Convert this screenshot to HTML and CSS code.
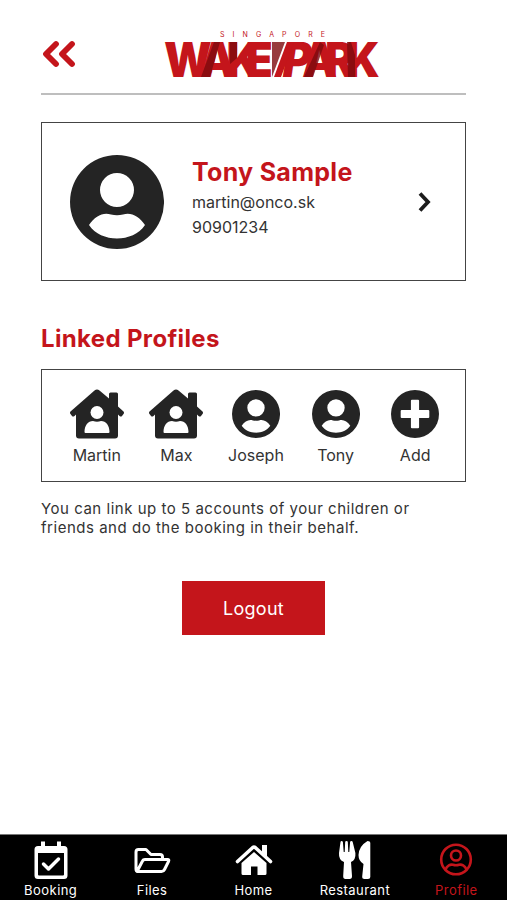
FILE: index.html
```html
<!DOCTYPE html>
<html lang="en">
<head>
  <meta charset="UTF-8">
  <title>Profile</title>
  <link rel="stylesheet" href="styles.css">
</head>
<body>
  <!-- shared icons -->
  <svg class="sprite">
    <symbol id="user" viewBox="0 0 94 94">
      <path fill-rule="evenodd" d="M47 0a47 47 0 1 1 0 94a47 47 0 0 1 0-94zM47 18a17 17 0 1 0 0 34a17 17 0 0 0 0-34zM19 70C31 88 63 88 75 70C69 61 61 57 53 59.500Q47 61 41 59.500C33 57 25 61 19 70z"/>
    </symbol>
    <symbol id="house-user" viewBox="0 0 54 49">
      <path d="M24.500 1Q27 -1 29.500 1L39 9V4.500Q39 3 40.500 3H46.500Q48 3 48 4.500V17L53.500 22Q54.500 23 53.500 24.500L52 26.500Q51 27.500 49.500 26.500L48 25V46Q48 49 45 49H9Q6 49 6 46V25L4.500 26.500Q3 27.500 2 26.500L.5 24.500Q-.5 23 .5 22z"/>
      <g fill="#fff"><circle cx="27" cy="23" r="6.500"/><path d="M14.500 42.500C14.500 36 18 31.500 23 31.500Q27 33 31 31.500C36 31.500 39.500 36 39.500 42.500Q39.500 43.500 38.500 43.500H15.500Q14.500 43.500 14.500 42.500z"/></g>
    </symbol>
  </svg>

  <main class="page">
    <header class="header">
      <svg class="back" viewBox="0 0 32 26"><path d="M13 3L3 13L13 23M29 3L19 13L29 23"/></svg>
      <svg class="logo" viewBox="0 0 216 52">
        <text class="logo-top" x="56" y="8" textLength="105">SINGAPORE</text>
        <text class="logo-main" transform="scale(.92 1)" x="0 39 68 89" y="48">WAKE</text>
        <text class="logo-main" transform="scale(.92 1)" x="129 150 175 198" y="48"><tspan class="logo-slant">P</tspan>ARK</text>
        <!-- folded shadows over the letters -->
        <path class="shade" d="M50 13H56L46 48H37zM66 13H73V29L66 35zM108 13H121L108 48z"/>
        <path class="shade" d="M156 13L160 16L149 48H140zM183 13H187L191 26V48H184z"/>
        <path class="slash" d="M123 13H130L117 48H110z"/>
      </svg>
    </header>

    <section class="card">
      <svg class="avatar"><use href="#user"/></svg>
      <div class="info">
        <h2 class="name">Tony Sample</h2>
        <p class="email">martin@onco.sk</p>
        <p class="phone">90901234</p>
      </div>
      <svg class="chevron" viewBox="0 0 12 20"><path d="M2 1.500L10 10L2 18.500"/></svg>
    </section>

    <h2 class="title">Linked Profiles</h2>
    <section class="linked">
      <div class="person"><svg class="icon-house"><use href="#house-user"/></svg><span>Martin</span></div>
      <div class="person"><svg class="icon-house"><use href="#house-user"/></svg><span>Max</span></div>
      <div class="person"><svg class="icon-user"><use href="#user"/></svg><span>Joseph</span></div>
      <div class="person"><svg class="icon-user"><use href="#user"/></svg><span>Tony</span></div>
      <div class="person">
        <svg class="icon-user" viewBox="0 0 47 47"><circle cx="23.500" cy="23.500" r="23.500"/><path fill="#fff" d="M20.500 9.500H26.500Q27.500 9.500 27.500 10.500V19.500H36.500Q37.500 19.500 37.500 20.500V26.500Q37.500 27.500 36.500 27.500H27.500V36.500Q27.500 37.500 26.500 37.500H20.500Q19.500 37.500 19.500 36.500V27.500H10.500Q9.500 27.500 9.500 26.500V20.500Q9.500 19.500 10.500 19.500H19.500V10.500Q19.500 9.500 20.500 9.500z"/></svg>
        <span>Add</span>
      </div>
    </section>
    <p class="hint">You can link up to 5 accounts of your children or<br>friends and do the booking in their behalf.</p>

    <button class="logout">Logout</button>
  </main>

  <nav class="tabs">
    <a class="tab">
      <svg viewBox="0 0 40 40"><path fill-rule="evenodd" d="M10 .5H14V5H26V.5H30V5H33Q36.500 5 36.500 8.500V34.500Q36.500 38 33 38H7Q3.500 38 3.500 34.500V8.500Q3.500 5 7 5H10zM7 12V33.500Q7 34.500 8 34.500H32Q33 34.500 33 33.500V12z"/><path class="line" stroke-width="3.500" d="M12.500 23L17.500 28L27.500 18"/></svg>
      <span>Booking</span>
    </a>
    <a class="tab">
      <svg viewBox="0 0 40 40"><path class="line" stroke-width="3" d="M4 28V11Q4 8.500 6.500 8.500H14L19 13.500H28Q30.500 13.500 30.500 16V18.500M5 30.500L10.500 20Q11.200 18.500 13 18.500H35.500Q37.500 18.500 36.500 20.500L32.500 28.500Q31.500 30.500 29.500 30.500H6Q4 30.500 4 28"/></svg>
      <span>Files</span>
    </a>
    <a class="tab">
      <svg viewBox="0 0 40 40"><path class="line" stroke-width="3.600" d="M3.500 20.500L18.800 6.500Q20 5.500 21.200 6.500L36.500 20.500"/><path d="M28 4H33V16L28 11zM20 11L32.500 22V32.500Q32.500 34 31 34H23.500V25.500H17V34H9Q7.500 34 7.500 32.500V22z"/></svg>
      <span>Home</span>
    </a>
    <a class="tab">
      <svg viewBox="0 0 40 40"><path d="M5.500 1Q5.600 0 6.600 0T7.900 1L8.700 11H9.700L10.200 1Q10.300 0 11.500 0T12.800 1L13.300 11H14.300L15.100 1Q15.300 0 16.400 0T17.700 1L20.400 12Q21 19 16 21L17 35Q17.200 38 14.500 38H10.500Q8 38 8.200 35L9 21Q3.500 19 4 12zM32.500 0Q35.300 0 35.300 2V36Q35.300 38 33 38H29.500Q27 38 27.200 35.500L28.500 23Q23.500 20 23.500 14Q24 5 32.500 0z"/></svg>
      <span>Restaurant</span>
    </a>
    <a class="tab active">
      <svg viewBox="0 0 40 40"><g class="line" stroke-width="2.600"><circle cx="20" cy="18.500" r="14.800"/><circle cx="20" cy="14.500" r="5"/><path d="M9.500 28.500C11 24.500 14.500 23 17 23.800Q20 24.800 23 23.800C25.500 23 29 24.500 30.500 28.500"/></g></svg>
      <span>Profile</span>
    </a>
  </nav>
</body>
</html>
```

FILE: styles.css
```css
* {
  box-sizing: border-box;
}

body {
  margin: 0;
  height: 900px;
  display: flex;
  flex-direction: column;
  font-family: Inter, sans-serif;
  font-size: 16px;
  color: #333;
  background: #fff;
}

h2, p {
  margin: 0;
}

svg {
  display: block;
  overflow: visible;
}

.sprite {
  width: 0;
  height: 0;
  overflow: hidden;
}

.page {
  flex: 1;
  padding: 0 41px;
  display: flex;
  flex-direction: column;
}

.header {
  height: 95px;
  padding: 29px 86px 0 2px;
  border-bottom: 2px solid #bebebe;
  display: flex;
  justify-content: space-between;
}

.back {
  width: 32px;
  height: 26px;
  margin-top: 12px;
  fill: none;
  stroke: #c4151b;
  stroke-width: 5.800;
  stroke-linecap: round;
  stroke-linejoin: round;
}

.logo {
  width: 216px;
  height: 52px;
}

.logo text {
  fill: #c4151b;
}

.logo-top {
  font-size: 7px;
}

.logo-main {
  font-size: 48px;
  font-weight: 900;
}

.logo-slant {
  font-style: italic;
}

.shade {
  fill: #7d0a0e;
  opacity: 0.8;
}

.slash {
  fill: #c4151b;
}

.card {
  height: 159px;
  margin-top: 27px;
  padding: 0 35px 0 28px;
  border: 1px solid #444;
  display: flex;
  align-items: center;
}

.avatar {
  width: 94px;
  height: 94px;
  fill: #242424;
}

.info {
  flex: 1;
  margin: -9px 0 0 28px;
}

.name, .title {
  color: #c4151b;
  font-size: 24px;
  font-weight: 700;
  line-height: 36px;
}

.name {
  font-size: 25px;
  letter-spacing: 0.3px;
}

.email, .phone {
  line-height: 25.500px;
}

.chevron {
  width: 12px;
  height: 20px;
  fill: none;
  stroke: #1c1c1c;
  stroke-width: 3.800;
}

.title {
  margin-top: 40px;
  letter-spacing: 0.35px;
}

.linked {
  height: 113px;
  margin-top: 12px;
  padding: 19px 10px 0 15px;
  border: 1px solid #444;
  display: flex;
}

.person {
  flex: 1;
  display: flex;
  flex-direction: column;
  align-items: center;
  gap: 6px;
  fill: #242424;
}

.icon-house {
  width: 54px;
  height: 50px;
}

.icon-user {
  width: 48px;
  height: 48px;
  margin: 1px 0;
}

.hint {
  margin-top: 18px;
  font-size: 15px;
  line-height: 18.500px;
  letter-spacing: 0.52px;
  white-space: nowrap;
}

.logout {
  width: 143px;
  height: 54px;
  margin: 44px auto 0;
  border: 0;
  background: #c4151b;
  color: #fff;
  font-family: inherit;
  font-size: 18px;
  letter-spacing: 0.3px;
}

.tabs {
  height: 66px;
  padding-top: 6px;
  border-top: 1px solid #777;
  background: #000;
  display: flex;
}

.tab {
  flex: 1;
  display: flex;
  flex-direction: column;
  align-items: center;
  gap: 1px;
  color: #fff;
  fill: #fff;
  font-size: 13px;
  letter-spacing: 0.45px;
}

.tab svg {
  width: 40px;
  height: 40px;
}

.line {
  fill: none;
  stroke: currentColor;
  stroke-linecap: round;
  stroke-linejoin: round;
}

.active {
  color: #c4151b;
}
```
